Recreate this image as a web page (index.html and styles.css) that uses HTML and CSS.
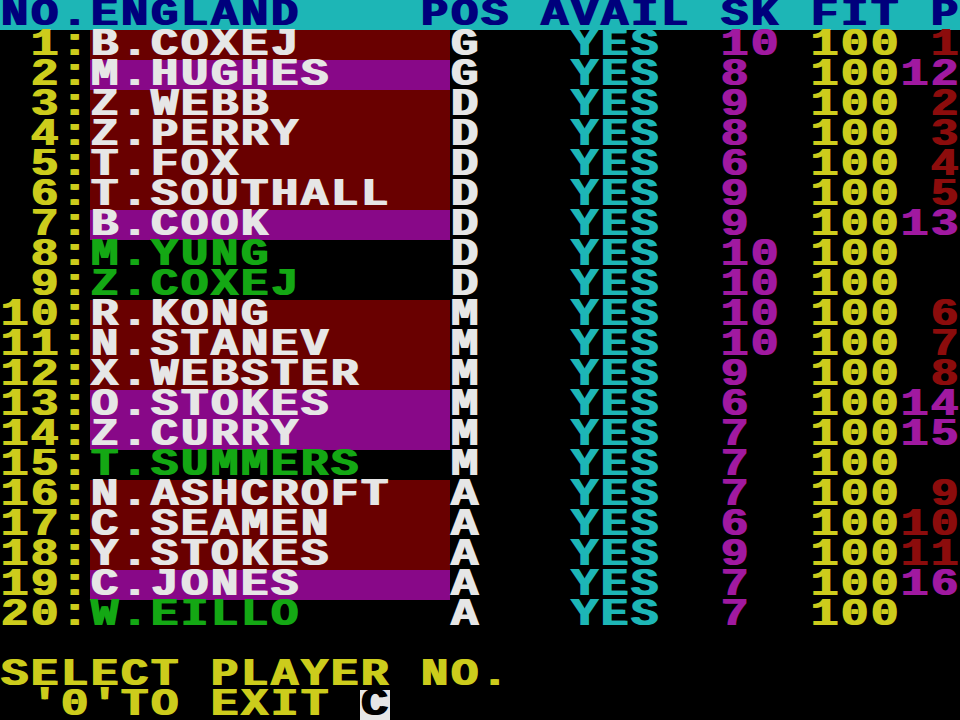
FILE: index.html
```html
<!DOCTYPE html>
<html>
<head>
<meta charset="utf-8">
<link rel="stylesheet" href="styles.css">
</head>
<body>
<div class="screen">
  <div class="row head">
    <span class="cell w14">NO.ENGLAND</span><span class="cell w4">POS</span><span class="cell w6">AVAIL</span><span class="cell w3">SK</span><span class="cell w4">FIT</span><span class="cell w1">P</span>
  </div>

  <div class="row"><span class="cell w3 yel"> 1:</span><span class="cell w12 name bg-red">B.COXEJ</span><span class="cell w4 wht">G</span><span class="cell w5 cya">YES</span><span class="cell w3 mag">10</span><span class="cell w3 yel">100</span><span class="cell w2 pl red">1</span></div>
  <div class="row"><span class="cell w3 yel"> 2:</span><span class="cell w12 name bg-mag">M.HUGHES</span><span class="cell w4 wht">G</span><span class="cell w5 cya">YES</span><span class="cell w3 mag">8</span><span class="cell w3 yel">100</span><span class="cell w2 pl mag">12</span></div>
  <div class="row"><span class="cell w3 yel"> 3:</span><span class="cell w12 name bg-red">Z.WEBB</span><span class="cell w4 wht">D</span><span class="cell w5 cya">YES</span><span class="cell w3 mag">9</span><span class="cell w3 yel">100</span><span class="cell w2 pl red">2</span></div>
  <div class="row"><span class="cell w3 yel"> 4:</span><span class="cell w12 name bg-red">Z.PERRY</span><span class="cell w4 wht">D</span><span class="cell w5 cya">YES</span><span class="cell w3 mag">8</span><span class="cell w3 yel">100</span><span class="cell w2 pl red">3</span></div>
  <div class="row"><span class="cell w3 yel"> 5:</span><span class="cell w12 name bg-red">T.FOX</span><span class="cell w4 wht">D</span><span class="cell w5 cya">YES</span><span class="cell w3 mag">6</span><span class="cell w3 yel">100</span><span class="cell w2 pl red">4</span></div>
  <div class="row"><span class="cell w3 yel"> 6:</span><span class="cell w12 name bg-red">T.SOUTHALL</span><span class="cell w4 wht">D</span><span class="cell w5 cya">YES</span><span class="cell w3 mag">9</span><span class="cell w3 yel">100</span><span class="cell w2 pl red">5</span></div>
  <div class="row"><span class="cell w3 yel"> 7:</span><span class="cell w12 name bg-mag">B.COOK</span><span class="cell w4 wht">D</span><span class="cell w5 cya">YES</span><span class="cell w3 mag">9</span><span class="cell w3 yel">100</span><span class="cell w2 pl mag">13</span></div>
  <div class="row"><span class="cell w3 yel"> 8:</span><span class="cell w12 name grn">M.YUNG</span><span class="cell w4 wht">D</span><span class="cell w5 cya">YES</span><span class="cell w3 mag">10</span><span class="cell w3 yel">100</span><span class="cell w2 pl"></span></div>
  <div class="row"><span class="cell w3 yel"> 9:</span><span class="cell w12 name grn">Z.COXEJ</span><span class="cell w4 wht">D</span><span class="cell w5 cya">YES</span><span class="cell w3 mag">10</span><span class="cell w3 yel">100</span><span class="cell w2 pl"></span></div>
  <div class="row"><span class="cell w3 yel">10:</span><span class="cell w12 name bg-red">R.KONG</span><span class="cell w4 wht">M</span><span class="cell w5 cya">YES</span><span class="cell w3 mag">10</span><span class="cell w3 yel">100</span><span class="cell w2 pl red">6</span></div>
  <div class="row"><span class="cell w3 yel">11:</span><span class="cell w12 name bg-red">N.STANEV</span><span class="cell w4 wht">M</span><span class="cell w5 cya">YES</span><span class="cell w3 mag">10</span><span class="cell w3 yel">100</span><span class="cell w2 pl red">7</span></div>
  <div class="row"><span class="cell w3 yel">12:</span><span class="cell w12 name bg-red">X.WEBSTER</span><span class="cell w4 wht">M</span><span class="cell w5 cya">YES</span><span class="cell w3 mag">9</span><span class="cell w3 yel">100</span><span class="cell w2 pl red">8</span></div>
  <div class="row"><span class="cell w3 yel">13:</span><span class="cell w12 name bg-mag">O.STOKES</span><span class="cell w4 wht">M</span><span class="cell w5 cya">YES</span><span class="cell w3 mag">6</span><span class="cell w3 yel">100</span><span class="cell w2 pl mag">14</span></div>
  <div class="row"><span class="cell w3 yel">14:</span><span class="cell w12 name bg-mag">Z.CURRY</span><span class="cell w4 wht">M</span><span class="cell w5 cya">YES</span><span class="cell w3 mag">7</span><span class="cell w3 yel">100</span><span class="cell w2 pl mag">15</span></div>
  <div class="row"><span class="cell w3 yel">15:</span><span class="cell w12 name grn">T.SUMMERS</span><span class="cell w4 wht">M</span><span class="cell w5 cya">YES</span><span class="cell w3 mag">7</span><span class="cell w3 yel">100</span><span class="cell w2 pl"></span></div>
  <div class="row"><span class="cell w3 yel">16:</span><span class="cell w12 name bg-red">N.ASHCROFT</span><span class="cell w4 wht">A</span><span class="cell w5 cya">YES</span><span class="cell w3 mag">7</span><span class="cell w3 yel">100</span><span class="cell w2 pl red">9</span></div>
  <div class="row"><span class="cell w3 yel">17:</span><span class="cell w12 name bg-red">C.SEAMEN</span><span class="cell w4 wht">A</span><span class="cell w5 cya">YES</span><span class="cell w3 mag">6</span><span class="cell w3 yel">100</span><span class="cell w2 pl red">10</span></div>
  <div class="row"><span class="cell w3 yel">18:</span><span class="cell w12 name bg-red">Y.STOKES</span><span class="cell w4 wht">A</span><span class="cell w5 cya">YES</span><span class="cell w3 mag">9</span><span class="cell w3 yel">100</span><span class="cell w2 pl red">11</span></div>
  <div class="row"><span class="cell w3 yel">19:</span><span class="cell w12 name bg-mag">C.JONES</span><span class="cell w4 wht">A</span><span class="cell w5 cya">YES</span><span class="cell w3 mag">7</span><span class="cell w3 yel">100</span><span class="cell w2 pl mag">16</span></div>
  <div class="row"><span class="cell w3 yel">20:</span><span class="cell w12 name grn">W.EILLO</span><span class="cell w4 wht">A</span><span class="cell w5 cya">YES</span><span class="cell w3 mag">7</span><span class="cell w3 yel">100</span><span class="cell w2 pl"></span></div>

  <div class="row"></div>
  <div class="row yel"><span class="cell">SELECT PLAYER NO.</span></div>
  <div class="row yel"><span class="cell"> '0'TO EXIT </span><span class="cell w1 cursor">C</span></div>
</div>
</body>
</html>
```

FILE: styles.css
```css
html, body {
  margin: 0;
  padding: 0;
  background: #000;
  overflow: hidden;
}

/* 32 columns of 25px, stretched horizontally to 30px cells */
.screen {
  width: 800px;
  height: 720px;
  background: #000;
  display: flex;
  flex-direction: column;
  transform: scaleX(1.2);
  transform-origin: 0 0;
  font-family: "Liberation Mono", "DejaVu Sans Mono", monospace;
  font-weight: bold;
  font-size: 38px;
  letter-spacing: 2.2px;
}

.row {
  height: 30px;
  line-height: 30px;
  display: flex;
  white-space: pre;
  text-shadow: 1.6px 0 0 currentColor;
}

.cell {
  display: block;
  height: 30px;
  flex: none;
}

.w1 { width: 25px; }
.w2 { width: 50px; }
.w3 { width: 75px; }
.w4 { width: 100px; }
.w5 { width: 125px; }
.w6 { width: 150px; }
.w12 { width: 300px; }
.w14 { width: 350px; }

.head {
  background: #1db6b6;
  color: #00007c;
}

.pl { text-align: right; }

.yel { color: #cccc1c; }
.wht { color: #e6e6e6; }
.cya { color: #1db6b6; }
.mag { color: #a019a0; }
.red { color: #8c0c0c; }
.grn { color: #14a814; }

.name { color: #e6e6e6; }
.name.grn { color: #14a814; }
.bg-red { background: #690000; }
.bg-mag { background: #880888; }

.cursor {
  background: #e6e6e6;
  color: #000;
}
```
